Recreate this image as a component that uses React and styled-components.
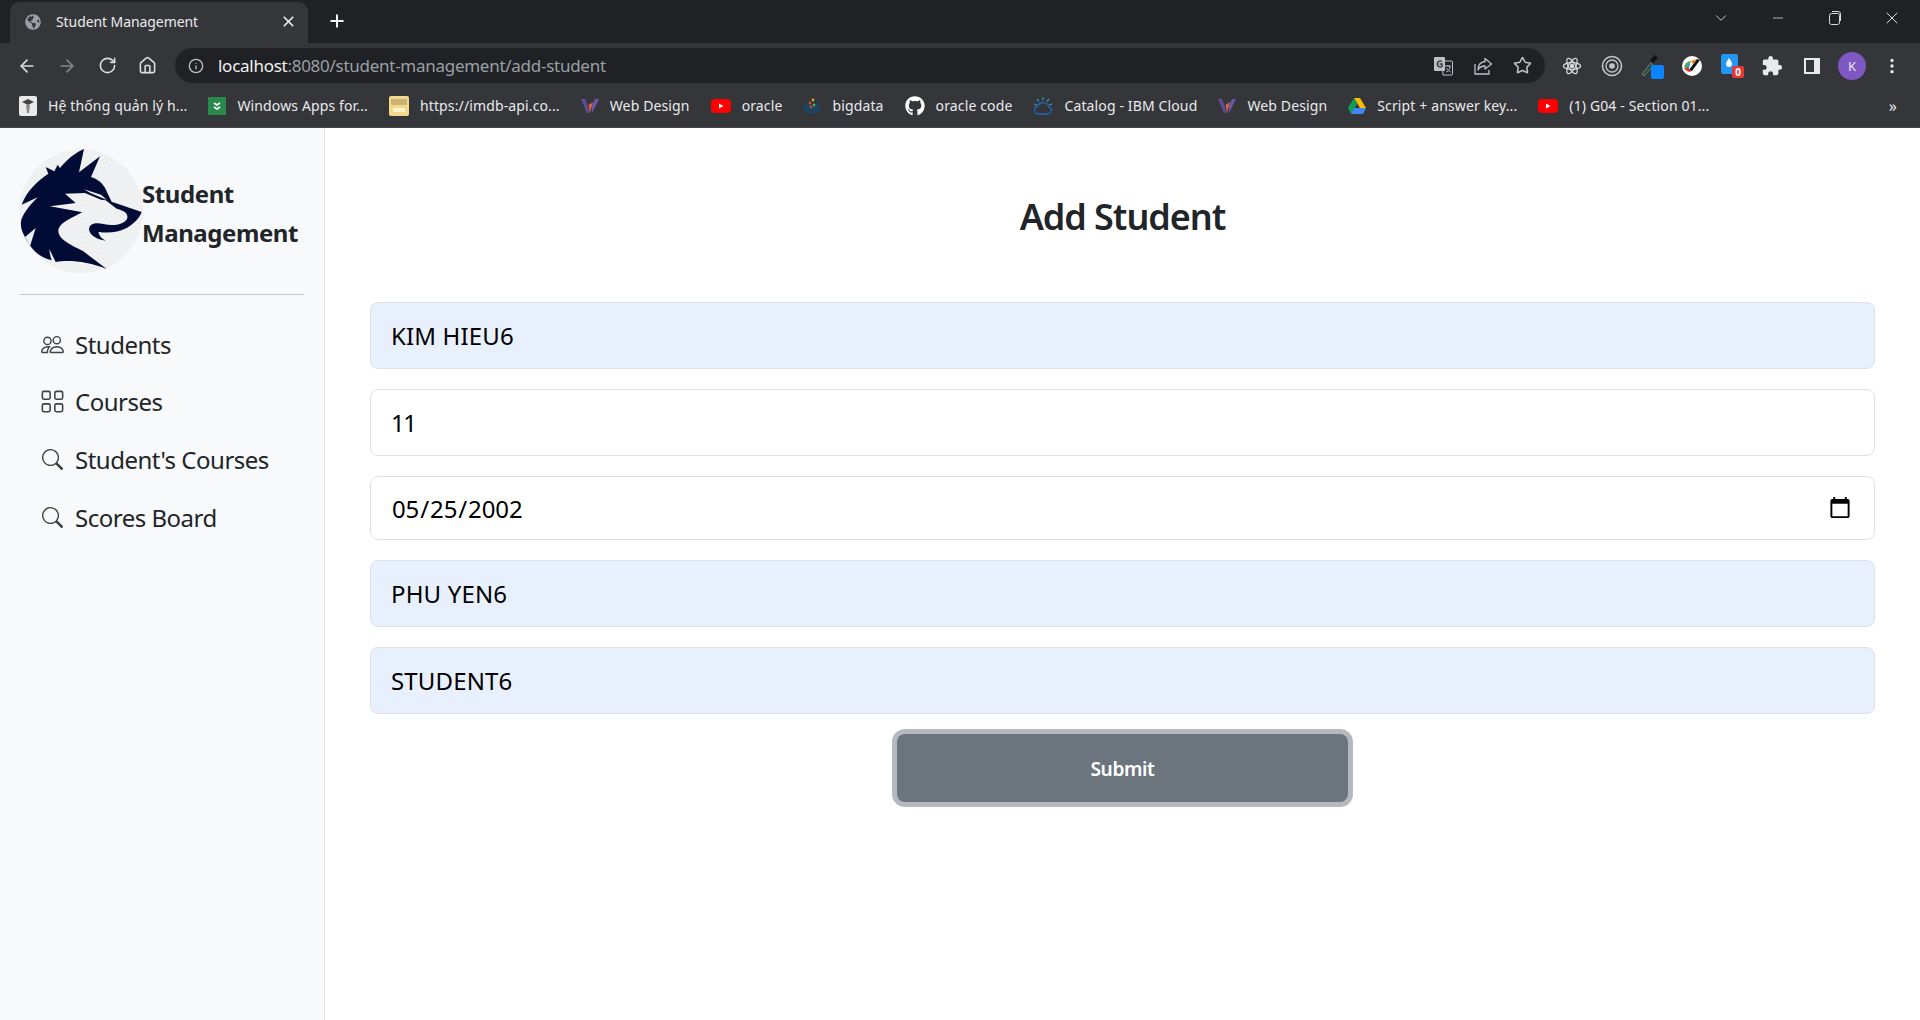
import React from "react";
import styled, { createGlobalStyle } from "styled-components";
import { ArrowLeft, ArrowRight, RotateCw, House, Info, X, Plus, Minus, ChevronDown, Star } from "lucide-react";
import { BsPeople, BsGrid, BsSearch, BsThreeDotsVertical } from "react-icons/bs";
import { FaGithub, FaGlobeAmericas } from "react-icons/fa";
import { MdExtension } from "react-icons/md";

const GlobalStyle = createGlobalStyle`
  html, body {
    margin: 0;
    height: 100%;
    overflow: hidden;
    background: white;
    font-family: "Noto Sans", "Open Sans", sans-serif;
  }
  * { box-sizing: border-box; }
`;

const Page = styled.div`
  display: flex;
  flex-direction: column;
  height: 1020px;
`;

/* browser chrome */
const TabStrip = styled.div`
  display: flex;
  align-items: flex-end;
  height: 43px;
  background: #202124;
  padding-left: 10px;
`;
const Tab = styled.div`
  display: flex;
  align-items: center;
  width: 298px;
  height: 41px;
  padding: 0 11px 2px 15px;
  background: #35363a;
  border-radius: 9px 9px 0 0;
  color: #e8eaed;
  font-size: 14px;
  letter-spacing: -0.08px;
  svg:first-child { color: #9aa0a6; flex: none; }
`;
const TabTitle = styled.span`
  flex: 1;
  margin-left: 15px;
`;
const NewTab = styled.div`
  display: flex;
  margin: 0 0 12px 19px;
  color: #f1f3f4;
`;
const WindowControls = styled.div`
  display: flex;
  align-self: flex-start;
  height: 36px;
  margin-left: auto;
  color: #dadce0;
`;
const WindowButton = styled.span`
  display: flex;
  align-items: center;
  justify-content: center;
  width: 57px;
`;
const Toolbar = styled.div`
  display: flex;
  align-items: center;
  height: 40px;
  background: #35363a;
  padding: 5px 0 0 7px;
  color: #dadce0;
`;
const NavButton = styled.span`
  display: flex;
  justify-content: center;
  width: 40px;
  color: ${(p) => (p.$muted ? "#80868b" : "#dadce0")};
`;
const Omnibox = styled.div`
  display: flex;
  align-items: center;
  width: 1370px;
  height: 35px;
  margin-left: 8px;
  padding: 0 13px 0 13px;
  border-radius: 18px;
  background: #202124;
  font-size: 17px;
  letter-spacing: -0.27px;
`;
const Url = styled.span`
  flex: 1;
  margin-left: 14px;
  color: #9aa0a6;
  b { font-weight: 400; color: #f1f3f4; }
`;
const OmniIcons = styled.div`
  display: flex;
  align-items: center;
  gap: 20px;
  color: #bdc1c6;
`;
const Extensions = styled.div`
  display: flex;
  margin-left: 7px;
`;
const ExtSlot = styled.span`
  display: flex;
  align-items: center;
  justify-content: center;
  width: 40px;
`;
const Avatar = styled.span`
  display: flex;
  align-items: center;
  justify-content: center;
  width: 28px;
  height: 28px;
  border-radius: 50%;
  background: #7e57c2;
  color: #e8eaed;
  font-size: 13px;
`;
const BookmarkBar = styled.div`
  display: flex;
  align-items: center;
  gap: 21px;
  height: 45px;
  background: #35363a;
  padding: 1px 0 0 19px;
  border-bottom: 1px solid #46474b;
  color: #e8eaed;
  font-size: 14px;
  letter-spacing: 0.13px;
`;
const Bookmark = styled.div`
  display: flex;
  align-items: center;
  gap: 11px;
  white-space: nowrap;
  svg { flex: none; }
`;
const More = styled.span`
  margin-left: auto;
  margin-right: 23px;
  font-size: 16px;
`;

/* app */
const Body = styled.div`
  display: flex;
  flex: 1;
  color: #212529;
`;
const Sidebar = styled.aside`
  width: 325px;
  background: #f8f9fa;
  border-right: 1px solid #dee2e6;
  padding: 19px 20px 0;
`;
const Brand = styled.div`
  display: flex;
  align-items: center;
  height: 127px;
`;
const BrandName = styled.div`
  width: 170px;
  margin: 4px 0 0 -2px;
  font-size: 24px;
  font-weight: 700;
  line-height: 39px;
  letter-spacing: -0.42px;
`;
const Divider = styled.hr`
  margin: 20px 0 0;
  border: 0;
  border-top: 1px solid #c4c6c9;
`;
const NavList = styled.nav`
  display: flex;
  flex-direction: column;
  gap: 23.8px;
  padding: 32px 0 0 21px;
`;
const NavItem = styled.div`
  display: flex;
  align-items: center;
  gap: 12px;
  height: 34px;
  font-size: 24px;
  letter-spacing: -0.5px;
`;
const NavIcon = styled.span`
  display: flex;
  align-items: center;
  justify-content: center;
  width: 22px;
  color: #3d4248;
  svg { flex: none; }
`;
const Main = styled.main`
  flex: 1;
  padding: 0 45px;
`;
const Title = styled.h1`
  margin: 61px 0 0;
  height: 113px;
  text-align: center;
  font-size: 36px;
  font-weight: 600;
  line-height: 56px;
  letter-spacing: -1.05px;
`;
const Form = styled.form`
  display: flex;
  flex-direction: column;
  align-items: center;
`;
const Field = styled.input`
  display: block;
  width: 100%;
  height: ${(p) => p.$height || 67}px;
  margin-bottom: 20px;
  padding: 0 20px;
  border: 1px solid #dee2e6;
  border-radius: 8px;
  background: ${(p) => (p.$filled ? "#e8f0fe" : "white")};
  color: black;
  font-family: inherit;
  font-size: 24px;
  letter-spacing: ${(p) => p.$track ?? 0.15}px;
  outline: none;
`;
const Submit = styled.button`
  width: 451px;
  height: 68px;
  border: 0;
  border-radius: 8px;
  background: #6c757d;
  box-shadow: 0 0 0 5px #b5b9bd;
  color: white;
  font-family: inherit;
  font-size: 19.2px;
  font-weight: 600;
  letter-spacing: -0.4px;
`;

const YouTube = () => (
  <svg width="20" height="16" viewBox="0 0 20 16">
    <rect y="1" width="20" height="14" rx="4" fill="#f00" />
    <path d="M8 5.500 12.500 8 8 10.500z" fill="#fff" />
  </svg>
);

const WebDesignIcon = () => (
  <svg width="18" height="16" viewBox="0 0 18 16">
    <path d="M0 1h4l3 8 1.500 6H6z" fill="#5f4b9c" />
    <path d="M9 15 7.500 7 12 4z" fill="#e2603c" />
    <path d="M11 8l3-7h4l-7 14z" fill="#6a58ac" />
  </svg>
);

const SchoolIcon = () => (
  <svg width="18" height="20" viewBox="0 0 18 20">
    <rect width="18" height="20" rx="2" fill="#e9e9e9" />
    <path d="M3 6l6-3 6 3-6 3z" fill="#444" />
    <path d="M7 9h4l-1 8H8z" fill="#8a8a8a" />
  </svg>
);

const WindowsAppsIcon = () => (
  <svg width="18" height="18" viewBox="0 0 18 18">
    <rect width="18" height="18" fill="#2b8a4b" />
    <path d="M6 6l3 2 3-2M6 10l3 2 3-2" fill="none" stroke="#fff" strokeWidth="1.600" />
  </svg>
);

const ImdbIcon = () => (
  <svg width="20" height="20" viewBox="0 0 20 20">
    <rect width="20" height="20" rx="2" fill="#f3d98b" />
    <rect x="2" y="3" width="16" height="6" fill="#c9b272" />
    <rect x="4" y="12" width="12" height="4" fill="#fff3c9" />
  </svg>
);

const BigdataIcon = () => (
  <svg width="18" height="18" viewBox="0 0 18 18">
    <path d="M1 6l8 2 8-2v9l-8 2-8-2z" fill="#1d4560" />
    <circle cx="7" cy="6" r="1.400" fill="#d8483b" />
    <circle cx="10" cy="3" r="1.400" fill="#e0a030" />
    <circle cx="11" cy="8" r="1.400" fill="#4caf50" />
    <circle cx="8" cy="10" r="1.400" fill="#c2473f" />
  </svg>
);

const IbmCloudIcon = () => (
  <svg width="20" height="20" viewBox="0 0 20 20" fill="none">
    <path d="M5 18h10a3.500 3.500 0 0 0 1-6.800 6 6 0 0 0-11.500-.7A3.800 3.800 0 0 0 5 18z" stroke="#2466b8" strokeWidth="1.300" />
    <path d="M10 1v3M4 3l2 2.400M16 3l-2 2.400M1 8l3 1M19 8l-3 1" stroke="#3a9fb5" strokeWidth="1.200" />
  </svg>
);

const DriveIcon = () => (
  <svg width="18" height="16" viewBox="0 0 18 16">
    <path d="M6 0h6l6 10h-6z" fill="#fbbc04" />
    <path d="M6 0 0 10l3 6 6-10z" fill="#0f9d58" />
    <path d="M3 16h12l3-6H6z" fill="#4285f4" />
  </svg>
);

const TranslateIcon = () => (
  <svg width="20" height="20" viewBox="0 0 20 20">
    <path d="M9 5h9.500a1 1 0 0 1 1 1v12a1 1 0 0 1-1 1H10z" fill="none" stroke="#bdc1c6" />
    <rect x="1" y="1" width="11" height="14" rx="1" fill="#bdc1c6" />
    <path d="M9 5.500A3 3 0 1 0 9 10.500V8H6.500" fill="none" stroke="#35363a" strokeWidth="1.400" />
    <path d="M12 10h6M15 9v1.500M13 16c3-1 4-3 4-6M13.500 12c1 2 2 3 4 4" fill="none" stroke="#bdc1c6" />
  </svg>
);

const ShareIcon = () => (
  <svg width="20" height="20" viewBox="0 0 20 20" fill="none" stroke="#bdc1c6" strokeWidth="1.300">
    <path d="M2 8v10h14v-4" />
    <path d="M12 2.500 18.500 8 12 13v-3C9 10 6.500 11 5 14c0-5 3-8 7-8.500z" strokeLinejoin="round" />
  </svg>
);

const ReactDevIcon = () => (
  <svg width="20" height="20" viewBox="-11 -11 22 22" fill="none" stroke="#d5d7da" strokeWidth="1.400">
    <ellipse rx="9.500" ry="3.800" />
    <ellipse rx="9.500" ry="3.800" transform="rotate(60)" />
    <ellipse rx="9.500" ry="3.800" transform="rotate(120)" />
    <circle r="1.800" fill="#d5d7da" />
  </svg>
);

const TargetIcon = () => (
  <svg width="22" height="22" viewBox="0 0 22 22" fill="none" stroke="#c2c4c6">
    <circle cx="11" cy="11" r="9.500" strokeWidth="1.600" />
    <circle cx="11" cy="11" r="6" strokeWidth="1.300" />
    <circle cx="11" cy="11" r="2.800" fill="#c2c4c6" stroke="none" />
  </svg>
);

const DropperIcon = () => (
  <svg width="24" height="26" viewBox="0 0 24 26">
    <path d="M2 21 11 10l2.500 2.500L4 23z" fill="#2e4a3c" stroke="#7fbf9a" strokeWidth=".6" />
    <path d="M10 7 15 2l3 3-5 5z" fill="#111" />
    <rect x="11" y="12" width="13" height="14" rx="2" fill="#0a84ff" />
  </svg>
);

const ColorIcon = () => (
  <svg width="20" height="20" viewBox="0 0 20 20">
    <circle cx="10" cy="10" r="10" fill="#fff" />
    <path d="M2 11a8 8 0 0 1 7-6l-3 8z" fill="#4caf50" />
    <path d="M2 12l4-1 3 5a8 8 0 0 1-7-4z" fill="#e53935" />
    <path d="M7 14 15 3l3 1-8 11z" fill="#111" />
    <path d="M9 5l6-2-4 5z" fill="#f57c00" />
    <path d="M5 9l3-2-1 6z" fill="#2196f3" />
  </svg>
);

const DropExtIcon = () => (
  <svg width="23" height="24" viewBox="0 0 23 24">
    <rect width="17" height="20" rx="2" fill="#2196f3" />
    <path d="M8 4c2 3 3 4 3 6a3 3 0 0 1-6 0c0-2 1-3 3-6z" fill="#fff" />
    <rect x="11" y="12" width="12" height="12" rx="2" fill="#e53935" />
    <text x="17" y="22" textAnchor="middle" fontSize="10" fontWeight="700" fill="#fff" fontFamily="Noto Sans">0</text>
  </svg>
);

const PanelIcon = () => (
  <svg width="16" height="16" viewBox="0 0 16 16">
    <path fillRule="evenodd" d="M0 0h16v16H0zM2 2v12h8V2z" fill="#e8eaed" />
  </svg>
);

const RestoreIcon = () => (
  <svg width="12" height="14" viewBox="0 0 12 14" fill="none" stroke="#dadce0">
    <rect x=".5" y="2.500" width="10" height="11" rx="2" />
    <path d="M3 .5h6a2.500 2.500 0 0 1 2.500 2.500v7" />
  </svg>
);

const WolfLogo = () => (
  <svg width="135" height="135" viewBox="0 0 405 405" style={{ flex: "none", margin: "0 -6px 0 -5px" }}>
    <defs>
      <pattern id="dither" width="14" height="14" patternUnits="userSpaceOnUse">
        <rect width="14" height="14" fill="#f3f4f5" />
        <rect width="7" height="7" fill="#ecedef" />
        <rect x="7" y="7" width="7" height="7" fill="#ecedef" />
      </pattern>
    </defs>
    <circle cx="198" cy="205" r="186" fill="url(#dither)" />
    <path
      fill="#000b36"
      d="M207 18 192 88 255 40 228 102C258 112 270 130 277 150L290 176 380 207C372 228 358 240 335 255 310 268 275 272 250 266 252 278 260 286 272 293 245 290 222 275 222 258 224 240 245 238 265 243 295 250 325 245 336 228 340 215 335 205 305 197L272 172 258 170 210 150 150 152 182 180 105 190 202 208C170 225 130 240 130 265 132 285 150 298 205 325L275 378C220 355 160 350 122 357L103 318C104 330 106 340 110 352 80 345 50 325 30 282L62 255 30 282C20 265 16 250 18 235 20 220 40 190 68 163L20 185C35 145 65 115 100 92L92 72 118 85 128 65 135 75C160 45 180 30 207 18Z"
    />
    <path fill="#eeeff0" d="M207 139 258 155 276 171 226 150Z" />
    <path fill="#eeeff0" d="M30 282 62 255 45 310Z" />
  </svg>
);

const bookmarks = [
  { icon: <SchoolIcon />, label: "Hệ thống quản lý h..." },
  { icon: <WindowsAppsIcon />, label: "Windows Apps for..." },
  { icon: <ImdbIcon />, label: "https://imdb-api.co..." },
  { icon: <WebDesignIcon />, label: "Web Design" },
  { icon: <YouTube />, label: "oracle" },
  { icon: <BigdataIcon />, label: "bigdata" },
  { icon: <FaGithub size={20} color="#fff" />, label: "oracle code" },
  { icon: <IbmCloudIcon />, label: "Catalog - IBM Cloud" },
  { icon: <WebDesignIcon />, label: "Web Design" },
  { icon: <DriveIcon />, label: "Script + answer key..." },
  { icon: <YouTube />, label: "(1) G04 - Section 01..." },
];

const navItems = [
  { icon: <BsPeople size={23} />, label: "Students" },
  { icon: <BsGrid size={25} />, label: "Courses" },
  { icon: <BsSearch size={21} />, label: "Student's Courses" },
  { icon: <BsSearch size={21} />, label: "Scores Board" },
];

const extensions = [
  <ReactDevIcon />,
  <TargetIcon />,
  <DropperIcon />,
  <ColorIcon />,
  <DropExtIcon />,
  <MdExtension size={22} color="#e8eaed" />,
  <PanelIcon />,
  <Avatar>K</Avatar>,
  <BsThreeDotsVertical size={18} color="#e8eaed" />,
];

export default function App() {
  return (
    <Page>
      <GlobalStyle />
      <TabStrip>
        <Tab>
          <FaGlobeAmericas size={16} />
          <TabTitle>Student Management</TabTitle>
          <X size={17} color="#e8eaed" strokeWidth={2.4} />
        </Tab>
        <NewTab>
          <Plus size={20} strokeWidth={2.4} />
        </NewTab>
        <WindowControls>
          <WindowButton><ChevronDown size={18} strokeWidth={1.2} /></WindowButton>
          <WindowButton><Minus size={16} strokeWidth={1.2} /></WindowButton>
          <WindowButton><RestoreIcon /></WindowButton>
          <WindowButton><X size={20} strokeWidth={1.2} /></WindowButton>
        </WindowControls>
      </TabStrip>
      <Toolbar>
        <NavButton><ArrowLeft size={20} strokeWidth={2} /></NavButton>
        <NavButton $muted><ArrowRight size={20} strokeWidth={2} /></NavButton>
        <NavButton><RotateCw size={19} strokeWidth={2} /></NavButton>
        <NavButton><House size={19} strokeWidth={2} /></NavButton>
        <Omnibox>
          <Info size={16} color="#bdc1c6" />
          <Url><b>localhost</b>:8080/student-management/add-student</Url>
          <OmniIcons>
            <TranslateIcon />
            <ShareIcon />
            <Star size={19} strokeWidth={2} />
          </OmniIcons>
        </Omnibox>
        <Extensions>
          {extensions.map((icon, i) => (
            <ExtSlot key={i}>{icon}</ExtSlot>
          ))}
        </Extensions>
      </Toolbar>
      <BookmarkBar>
        {bookmarks.map((b, i) => (
          <Bookmark key={i}>
            {b.icon}
            {b.label}
          </Bookmark>
        ))}
        <More>»</More>
      </BookmarkBar>
      <Body>
        <Sidebar>
          <Brand>
            <WolfLogo />
            <BrandName>Student Management</BrandName>
          </Brand>
          <Divider />
          <NavList>
            {navItems.map((item) => (
              <NavItem key={item.label}>
                <NavIcon>{item.icon}</NavIcon>
                {item.label}
              </NavItem>
            ))}
          </NavList>
        </Sidebar>
        <Main>
          <Title>Add Student</Title>
          <Form>
            <Field $filled type="text" defaultValue="KIM HIEU6" />
            <Field type="number" defaultValue="11" $track={-1.5} />
            <Field type="date" defaultValue="2002-05-25" $height={64} $track={-0.12} />
            <Field $filled type="text" defaultValue="PHU YEN6" />
            <Field $filled type="text" defaultValue="STUDENT6" />
            <Submit type="button">Submit</Submit>
          </Form>
        </Main>
      </Body>
    </Page>
  );
}
